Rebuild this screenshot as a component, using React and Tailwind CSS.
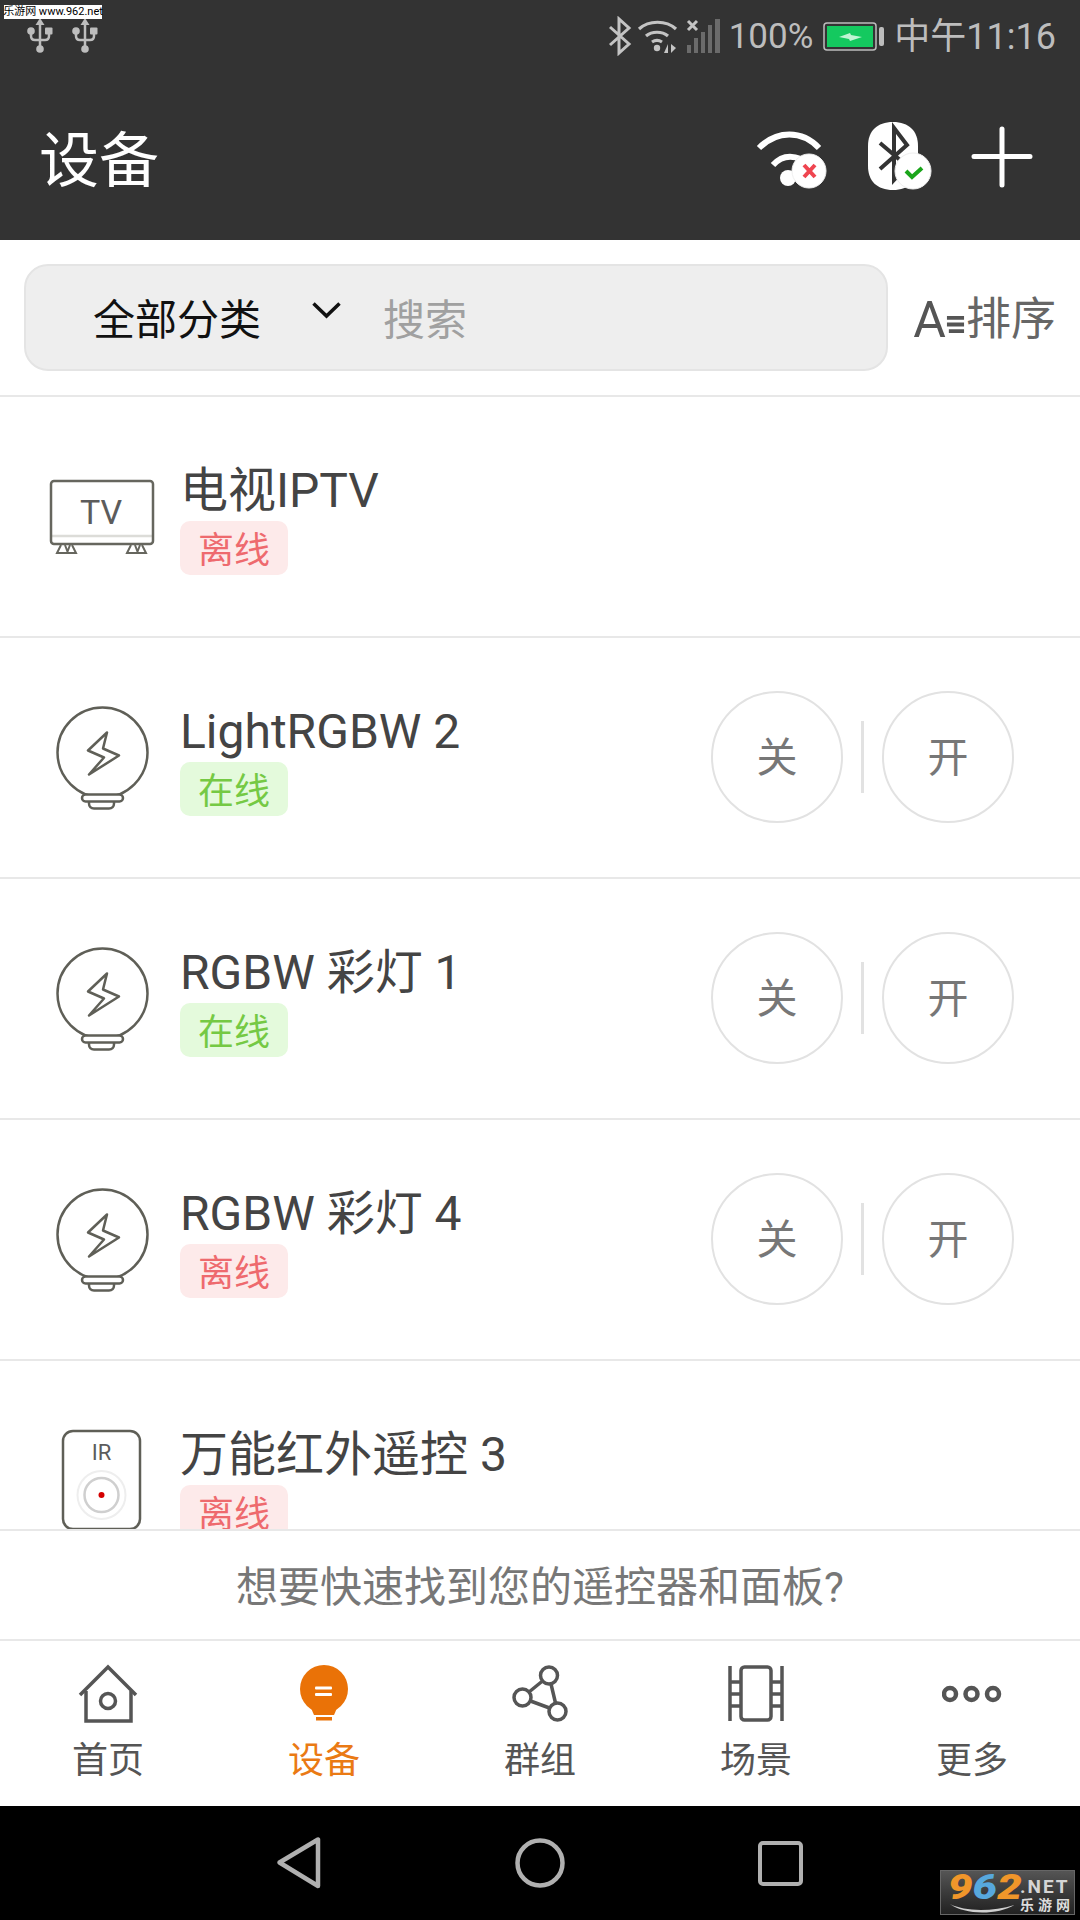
const devices = [
  { name: '电视IPTV', online: false, icon: 'tv', buttons: false },
  { name: 'LightRGBW 2', online: true, icon: 'bulb', buttons: true },
  { name: 'RGBW 彩灯 1', online: true, icon: 'bulb', buttons: true },
  { name: 'RGBW 彩灯 4', online: false, icon: 'bulb', buttons: true },
  { name: '万能红外遥控 3', online: false, icon: 'ir', buttons: false },
]

function UsbIcon() {
  return (
    <svg viewBox="0 0 30 36" className="w-[30px] h-[36px]" fill="none" stroke="#bdbdbd" strokeWidth="2.5">
      <path d="M15 6V32" />
      <path d="M15 0l4.500 7h-9z" fill="#bdbdbd" stroke="none" />
      <circle cx="15" cy="31" r="3.800" fill="#bdbdbd" stroke="none" />
      <circle cx="6" cy="13" r="3.800" fill="#bdbdbd" stroke="none" />
      <rect x="20" y="9.500" width="7.500" height="7" rx="1" fill="#bdbdbd" stroke="none" />
      <path d="M6 14v4c0 3 2 4 4 4h10c2 0 4-1 4-4v-3" />
    </svg>
  )
}

function StatusBluetooth() {
  return (
    <svg viewBox="606 16 26 40" className="w-[26px] h-[40px]" fill="none" stroke="#c4c4c4" strokeWidth="3">
      <path d="M609 27l19 17-10 9V19l10 9-19 17" />
    </svg>
  )
}

function StatusWifi() {
  return (
    <svg viewBox="638 16 42 40" className="w-[42px] h-[40px]" fill="none" stroke="#c4c4c4" strokeWidth="3.200">
      <path d="M640 29c10-9 27-9 37 0" />
      <path d="M647 36c6-5 16-5 22 0" />
      <path d="M653 42c3-2 7-2 10 0" />
      <circle cx="658" cy="48" r="3.200" fill="#c4c4c4" stroke="none" />
      <path d="M669 44v9h-4z" fill="#c4c4c4" stroke="none" />
      <path d="M672 44v9l5-5z" fill="#c4c4c4" stroke="none" />
    </svg>
  )
}

function StatusSignal() {
  return (
    <svg viewBox="686 16 38 40" className="w-[38px] h-[40px]">
      <rect x="688" y="45" width="4" height="8" fill="#6b6b6b" />
      <rect x="695" y="38" width="4" height="15" fill="#6b6b6b" />
      <rect x="702" y="32" width="4" height="21" fill="#6b6b6b" />
      <rect x="709" y="25" width="4" height="28" fill="#6b6b6b" />
      <rect x="716" y="19" width="5" height="34" fill="#6b6b6b" />
      <path d="M689 21l9 9M698 21l-9 9" stroke="#c4c4c4" strokeWidth="3" />
    </svg>
  )
}

function StatusBattery() {
  return (
    <svg viewBox="822 20 64 32" className="w-[64px] h-[32px]">
      <rect x="825" y="23" width="52" height="27" rx="3" fill="none" stroke="#bdbdbd" strokeWidth="1.500" />
      <rect x="828" y="26" width="46" height="21" fill="#14c95f" />
      <rect x="880" y="27" width="5" height="19" rx="2" fill="#bdbdbd" />
      <path d="M840 37l11-4 1 2 11 2-12 4-1-2z" fill="#bff5d3" />
    </svg>
  )
}

function HeaderWifi() {
  return (
    <svg viewBox="754 115 76 80" className="w-[76px] h-[80px]" fill="none" stroke="#fff" strokeWidth="6">
      <path d="M759 147c18-18 43-18 60 0" />
      <path d="M773 164c8-9 18-10 28-6" />
      <circle cx="788" cy="177" r="8" fill="#fff" stroke="none" />
      <circle cx="809" cy="170" r="17" fill="#fff" stroke="#f0f0f0" strokeWidth="1" />
      <path d="M804 164l11 12M815 164l-11 12" stroke="#ef4550" strokeWidth="4" />
    </svg>
  )
}

function HeaderBluetooth() {
  return (
    <svg viewBox="865 115 70 80" className="w-[70px] h-[80px]" fill="none">
      <path d="M893 121c16 0 25 9 25 24v20c0 15-9 24-25 24s-25-9-25-24v-20c0-15 9-24 25-24z" fill="#fff" />
      <path d="M880 142l27 23-13 14V127l13 17-27 24" stroke="#333" strokeWidth="4" />
      <circle cx="913" cy="170" r="18" fill="#fff" stroke="#eee" strokeWidth="1" />
      <path d="M906 170l6 6 10-9" stroke="#1aa51a" strokeWidth="4" />
    </svg>
  )
}

function PlusIcon() {
  return (
    <svg viewBox="970 115 64 80" className="w-[64px] h-[80px]" stroke="#fff" strokeWidth="5" strokeLinecap="round">
      <path d="M1002 128V184M974 155.500H1030" />
    </svg>
  )
}

function TvIcon() {
  return (
    <svg viewBox="48 475 108 82" className="w-[108px] h-[82px]" fill="none">
      <path d="M51 535H153" stroke="#dcdcd8" strokeWidth="2.500" />
      <rect x="51" y="480" width="102" height="63" rx="3" stroke="#66665e" strokeWidth="2.500" />
      <path d="M61 544l-4 8h19l-4-8M65 544l3 8M70 544l-3 8M131 544l-4 8h19l-4-8M135 544l3 8M140 544l-3 8" stroke="#66665e" strokeWidth="2" />
      <text x="101" y="523" textAnchor="middle" fontSize="34" fill="#5c5c5c" fontFamily="Roboto, sans-serif">TV</text>
    </svg>
  )
}

function BulbIcon() {
  return (
    <svg viewBox="52 701.500 100 110" className="w-[100px] h-[110px]" fill="none" stroke="#5f5f57" strokeWidth="2.500">
      <circle cx="102.500" cy="751" r="45" />
      <path d="M107 731L88 749l16 7-15 17 30-19-16-7z" strokeLinejoin="round" />
      <rect x="82" y="793" width="41" height="7" rx="3.500" fill="#fff" />
      <path d="M89 800v2c0 3 2 5 5 5h15c3 0 5-2 5-5v-2" />
    </svg>
  )
}

function IrIcon() {
  return (
    <svg viewBox="52 1426 100 110" className="w-[100px] h-[110px]" fill="none">
      <rect x="63" y="1431" width="77" height="98" rx="10" stroke="#5f5f57" strokeWidth="2.500" />
      <text x="101.500" y="1460" textAnchor="middle" fontSize="22" fill="#5c5c5c" fontFamily="Roboto, sans-serif">IR</text>
      <circle cx="101.500" cy="1495" r="24" stroke="#eeeeee" strokeWidth="2" />
      <circle cx="101.500" cy="1495" r="17" stroke="#cfcfcf" strokeWidth="2.500" />
      <circle cx="101.500" cy="1495" r="3" fill="#d40000" />
    </svg>
  )
}

function HomeTab() {
  return (
    <svg viewBox="78 1664 60 60" className="w-[60px] h-[60px]" fill="none" stroke="#555" strokeWidth="3.500">
      <path d="M80 1695l28-28 28 28" />
      <path d="M86 1691v30h45v-30" />
      <circle cx="108" cy="1701" r="7.500" />
    </svg>
  )
}

function DeviceTab() {
  return (
    <svg viewBox="295 1664 60 60" className="w-[60px] h-[60px]">
      <circle cx="325" cy="1689" r="24" fill="#ea7207" />
      <path d="M312 1708h26l-3 7h-20z" fill="#ea7207" />
      <rect x="317" y="1717" width="16" height="3.500" fill="#ea7207" />
      <rect x="316" y="1686.500" width="17" height="3" rx="1" fill="#fff" />
      <rect x="316" y="1693" width="17" height="3" rx="1" fill="#fff" />
    </svg>
  )
}

function GroupTab() {
  return (
    <svg viewBox="510 1664 60 60" className="w-[60px] h-[60px]" fill="none" stroke="#555" strokeWidth="3.500">
      <circle cx="549" cy="1675.500" r="8.500" />
      <circle cx="522.500" cy="1697.500" r="8.500" />
      <circle cx="557.500" cy="1711.500" r="8.500" />
      <path d="M542.500 1681l-13.500 11M551 1684l4.500 19M530.500 1701l19 7" />
    </svg>
  )
}

function SceneTab() {
  return (
    <svg viewBox="726 1664 60 60" className="w-[60px] h-[60px]" fill="none" stroke="#555" strokeWidth="3.500">
      <path d="M730 1666v55M782 1666v55" />
      <rect x="741" y="1667" width="30" height="53" rx="3.500" />
      <path d="M730 1682h11M730 1694h11M730 1706h11M771 1682h11M771 1694h11M771 1706h11" />
    </svg>
  )
}

function MoreTab() {
  return (
    <svg viewBox="942 1664 60 60" className="w-[60px] h-[60px]" fill="none" stroke="#555" strokeWidth="4.500">
      <circle cx="950" cy="1694" r="6" />
      <circle cx="971.500" cy="1694" r="6" />
      <circle cx="993" cy="1694" r="6" />
    </svg>
  )
}

const tabs = [
  { label: '首页', Icon: HomeTab },
  { label: '设备', Icon: DeviceTab, active: true },
  { label: '群组', Icon: GroupTab },
  { label: '场景', Icon: SceneTab },
  { label: '更多', Icon: MoreTab },
]

function DeviceIcon({ type }) {
  if (type === 'tv') return <TvIcon />
  if (type === 'ir') return <IrIcon />
  return <BulbIcon />
}

function DeviceRow({ device }) {
  return (
    <div className="h-[241px] shrink-0 flex items-center pl-[48px] pr-[66px] border-b-2 border-[#e8e8e8]">
      <div className="w-[108px] flex justify-center shrink-0">
        <DeviceIcon type={device.icon} />
      </div>
      <div className="ml-[24px] flex flex-col items-start pt-[4px]">
        <div className="text-[48px] leading-[58px] text-[#444]">{device.name}</div>
        <div
          className={
            device.online
              ? 'mt-[1px] w-[108px] h-[54px] pt-[6px] rounded-[10px] flex items-center justify-center text-[36px] bg-[#e4fadc] text-[#75c944]'
              : 'mt-[1px] w-[108px] h-[54px] pt-[6px] rounded-[10px] flex items-center justify-center text-[36px] bg-[#fdeaea] text-[#ee6a6e]'
          }
        >
          {device.online ? '在线' : '离线'}
        </div>
      </div>
      {device.buttons && (
        <div className="ml-auto flex items-center gap-[18px] mb-[2px]">
          <div className="w-[132px] h-[132px] pt-[5px] rounded-full border-2 border-[#e2e2e2] flex items-center justify-center text-[41px] text-[#777]">关</div>
          <div className="w-[3px] h-[72px] bg-[#e2e2e2]" />
          <div className="w-[132px] h-[132px] pt-[5px] rounded-full border-2 border-[#e2e2e2] flex items-center justify-center text-[41px] text-[#777]">开</div>
        </div>
      )}
    </div>
  )
}

export default function App() {
  return (
    <div className="relative w-full h-[1920px] overflow-hidden flex flex-col bg-white font-['Roboto','Noto_Sans_CJK_SC',sans-serif]">
      <header className="h-[240px] shrink-0 bg-[#333] flex flex-col">
        <div className="h-[72px] flex items-center pl-[25px] pr-[24px]">
          <div className="flex gap-[15px]">
            <UsbIcon />
            <UsbIcon />
          </div>
          <div className="ml-auto flex items-center text-[#bdbdbd]">
            <StatusBluetooth />
            <div className="ml-[4px]"><StatusWifi /></div>
            <div className="ml-[6px]"><StatusSignal /></div>
            <span className="ml-[6px] pt-[2px] text-[35px]">100%</span>
            <div className="ml-[8px]"><StatusBattery /></div>
            <span className="ml-[9px] pt-[2px] text-[36px]">中午11:16</span>
          </div>
        </div>
        <div className="flex-1 flex items-center pl-[39px] pr-[46px]">
          <div className="text-[60px] text-white leading-none pt-[11px]">设备</div>
          <div className="ml-auto flex items-center gap-[35px]">
            <HeaderWifi />
            <HeaderBluetooth />
            <PlusIcon />
          </div>
        </div>
      </header>

      <div className="h-[157px] shrink-0 flex items-center pl-[24px] pr-[24px] border-b-2 border-[#e8e8e8]">
        <div className="w-[864px] h-[107px] rounded-[24px] bg-[#eeeeee] border-2 border-[#e4e4e4] flex items-center pl-[67px]">
          <span className="text-[42px] text-[#111] pt-[6px]">全部分类</span>
          <svg viewBox="0 0 29 18" className="ml-[51px] mb-[15px] w-[29px] h-[18px]" fill="none" stroke="#111" strokeWidth="3.500">
            <path d="M1.500 2.500L14.500 15 27.500 2.500" />
          </svg>
          <span className="ml-[42px] text-[42px] text-[#a0a0a0] pt-[6px]">搜索</span>
        </div>
        <div className="ml-auto flex items-center text-[#666] pt-[4px]">
          <span className="text-[50px] text-[#555] leading-none">A</span>
          <svg viewBox="0 0 20 20" className="w-[19px] h-[19px] mt-[10px]" stroke="#555" strokeWidth="4">
            <path d="M1 3H19M1 10H19M3 17H19" />
          </svg>
          <span className="text-[45px] ml-[1px]">排序</span>
        </div>
      </div>

      <div className="flex-1 overflow-hidden flex flex-col min-h-0">
        {devices.map(d => (
          <DeviceRow key={d.name} device={d} />
        ))}
      </div>

      <div className="h-[110px] shrink-0 pt-[4px] flex items-center justify-center border-t-2 border-[#e8e8e8] text-[42px] text-[#777]">
        想要快速找到您的遥控器和面板?
      </div>

      <nav className="h-[167px] shrink-0 grid grid-cols-5 border-t-2 border-[#e8e8e8] pt-[23px]">
        {tabs.map(({ label, Icon, active }) => (
          <div key={label} className="flex flex-col items-center">
            <Icon />
            <span className={active ? 'mt-[17px] text-[36px] leading-[40px] text-[#ea7a14]' : 'mt-[17px] text-[36px] leading-[40px] text-[#555]'}>{label}</span>
          </div>
        ))}
      </nav>

      <div className="h-[114px] shrink-0 bg-black flex items-center pl-[276px]">
        <svg viewBox="276 1836 46 54" className="w-[46px] h-[54px]" fill="none" stroke="#b0b0b0" strokeWidth="4.500" strokeLinejoin="round">
          <path d="M279.500 1862.500L318 1839.500V1886z" />
        </svg>
        <svg viewBox="514 1837 52 52" className="ml-[192px] w-[52px] h-[52px]" fill="none" stroke="#b0b0b0" strokeWidth="4.500">
          <circle cx="540" cy="1863" r="22.500" />
        </svg>
        <div className="ml-[192px] w-[45px] h-[45px] rounded-[5px] border-[4.500px] border-[#b0b0b0]" />
      </div>

      <div className="absolute left-[4px] top-[5px] w-[98px] h-[14px] bg-white flex items-center justify-center text-[11px] text-black whitespace-nowrap">
        乐游网 www.962.net
      </div>

      <div className="absolute left-[940px] top-[1870px] w-[135px] h-[45px] border border-[#666] bg-gradient-to-b from-[#555] to-[#222]">
        <div className="absolute left-[7px] top-[-3px] text-[35px] leading-[40px] font-black italic whitespace-nowrap origin-left scale-x-[1.25]">
          <span className="text-[#f0962a]">9</span>
          <span className="text-[#57a8dd]">6</span>
          <span className="text-[#f0962a]">2</span>
        </div>
        <div className="absolute left-[79px] top-[6px] text-[19px] leading-[20px] font-bold tracking-[2px] text-[#d5d5d5] whitespace-nowrap">.NET</div>
        <div className="absolute left-[79px] top-[26px] text-[14px] leading-[16px] font-bold tracking-[4px] text-[#ddd] whitespace-nowrap">乐游网</div>
        <svg viewBox="0 0 80 12" className="absolute left-[8px] top-[31px] w-[68px] h-[11px]">
          <path d="M1 2c18 9 50 9 76 1-20 12-58 12-76-1z" fill="#cfcfcf" />
        </svg>
      </div>
    </div>
  )
}
